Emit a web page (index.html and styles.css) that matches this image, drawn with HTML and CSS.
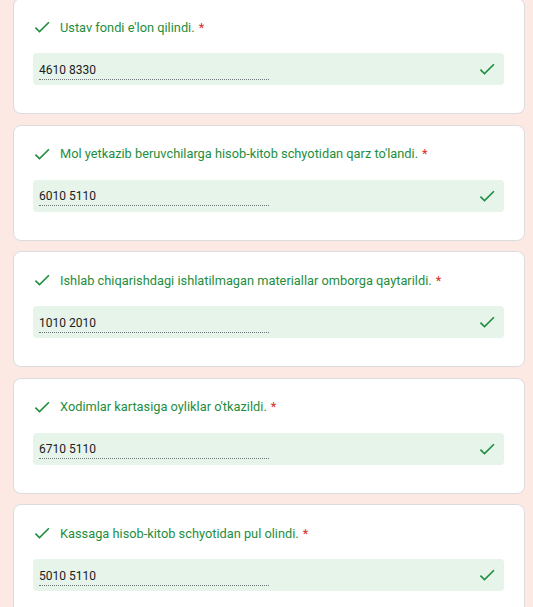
FILE: index.html
```html
<!DOCTYPE html>
<html>
<head>
<meta charset="utf-8">
<link rel="stylesheet" href="styles.css">
</head>
<body>
<div class="list">
  <div class="card">
    <div class="title">
      <svg class="tick" viewBox="0 0 24 24"><path d="M9 16.2L4.8 12l-1.4 1.4L9 19 21 7l-1.4-1.4L9 16.2z"/></svg>
      <span>Ustav fondi e'lon qilindi.</span><span class="req">*</span>
    </div>
    <div class="field">
      <div class="value">4610 8330</div>
      <svg class="tick" viewBox="0 0 24 24"><path d="M9 16.2L4.8 12l-1.4 1.4L9 19 21 7l-1.4-1.4L9 16.2z"/></svg>
    </div>
  </div>
  <div class="card">
    <div class="title">
      <svg class="tick" viewBox="0 0 24 24"><path d="M9 16.2L4.8 12l-1.4 1.4L9 19 21 7l-1.4-1.4L9 16.2z"/></svg>
      <span>Mol yetkazib beruvchilarga hisob-kitob schyotidan qarz to'landi.</span><span class="req">*</span>
    </div>
    <div class="field">
      <div class="value">6010 5110</div>
      <svg class="tick" viewBox="0 0 24 24"><path d="M9 16.2L4.8 12l-1.4 1.4L9 19 21 7l-1.4-1.4L9 16.2z"/></svg>
    </div>
  </div>
  <div class="card">
    <div class="title">
      <svg class="tick" viewBox="0 0 24 24"><path d="M9 16.2L4.8 12l-1.4 1.4L9 19 21 7l-1.4-1.4L9 16.2z"/></svg>
      <span>Ishlab chiqarishdagi ishlatilmagan materiallar omborga qaytarildi.</span><span class="req">*</span>
    </div>
    <div class="field">
      <div class="value">1010 2010</div>
      <svg class="tick" viewBox="0 0 24 24"><path d="M9 16.2L4.8 12l-1.4 1.4L9 19 21 7l-1.4-1.4L9 16.2z"/></svg>
    </div>
  </div>
  <div class="card">
    <div class="title">
      <svg class="tick" viewBox="0 0 24 24"><path d="M9 16.2L4.8 12l-1.4 1.4L9 19 21 7l-1.4-1.4L9 16.2z"/></svg>
      <span>Xodimlar kartasiga oyliklar o'tkazildi.</span><span class="req">*</span>
    </div>
    <div class="field">
      <div class="value">6710 5110</div>
      <svg class="tick" viewBox="0 0 24 24"><path d="M9 16.2L4.8 12l-1.4 1.4L9 19 21 7l-1.4-1.4L9 16.2z"/></svg>
    </div>
  </div>
  <div class="card">
    <div class="title">
      <svg class="tick" viewBox="0 0 24 24"><path d="M9 16.2L4.8 12l-1.4 1.4L9 19 21 7l-1.4-1.4L9 16.2z"/></svg>
      <span>Kassaga hisob-kitob schyotidan pul olindi.</span><span class="req">*</span>
    </div>
    <div class="field">
      <div class="value">5010 5110</div>
      <svg class="tick" viewBox="0 0 24 24"><path d="M9 16.2L4.8 12l-1.4 1.4L9 19 21 7l-1.4-1.4L9 16.2z"/></svg>
    </div>
  </div>
</div>
</body>
</html>
```
FILE: styles.css
```css
html, body {
  margin: 0;
  padding: 0;
  background: #fde9e3;
  font-family: Roboto, "Liberation Sans", Arial, sans-serif;
  overflow: hidden;
}
.list {
  display: flex;
  flex-direction: column;
  gap: 10.5px;
  padding-left: 13px;
  width: 512px;
  margin-top: -2px;
}
.card {
  background: #fff;
  border: 1px solid #dadce0;
  border-radius: 8px;
  height: 116px;
  box-sizing: border-box;
  padding: 18px 20px 0 19px;
}
.title {
  display: flex;
  align-items: center;
  height: 20px;
  font-size: 12.8px;
  color: #1e8e3e;
}
.title .tick {
  width: 20px;
  height: 20px;
  margin-left: -1px;
  margin-right: 8px;
  fill: #1e8e3e;
  flex: none;
}
.req {
  color: #d93025;
  margin-left: 4px;
}
.field {
  margin-top: 16px;
  height: 32px;
  background: #e6f4ea;
  border-radius: 4px;
  display: flex;
  align-items: center;
  justify-content: space-between;
  padding: 0 7px 0 6px;
}
.value {
  width: 230px;
  font-size: 12px;
  color: #202124;
  border-bottom: 1px dotted #70757a;
  padding-top: 4px;
  padding-bottom: 2px;
  line-height: 14px;
}
.field .tick {
  width: 20px;
  height: 20px;
  fill: #1e8e3e;
}
```
